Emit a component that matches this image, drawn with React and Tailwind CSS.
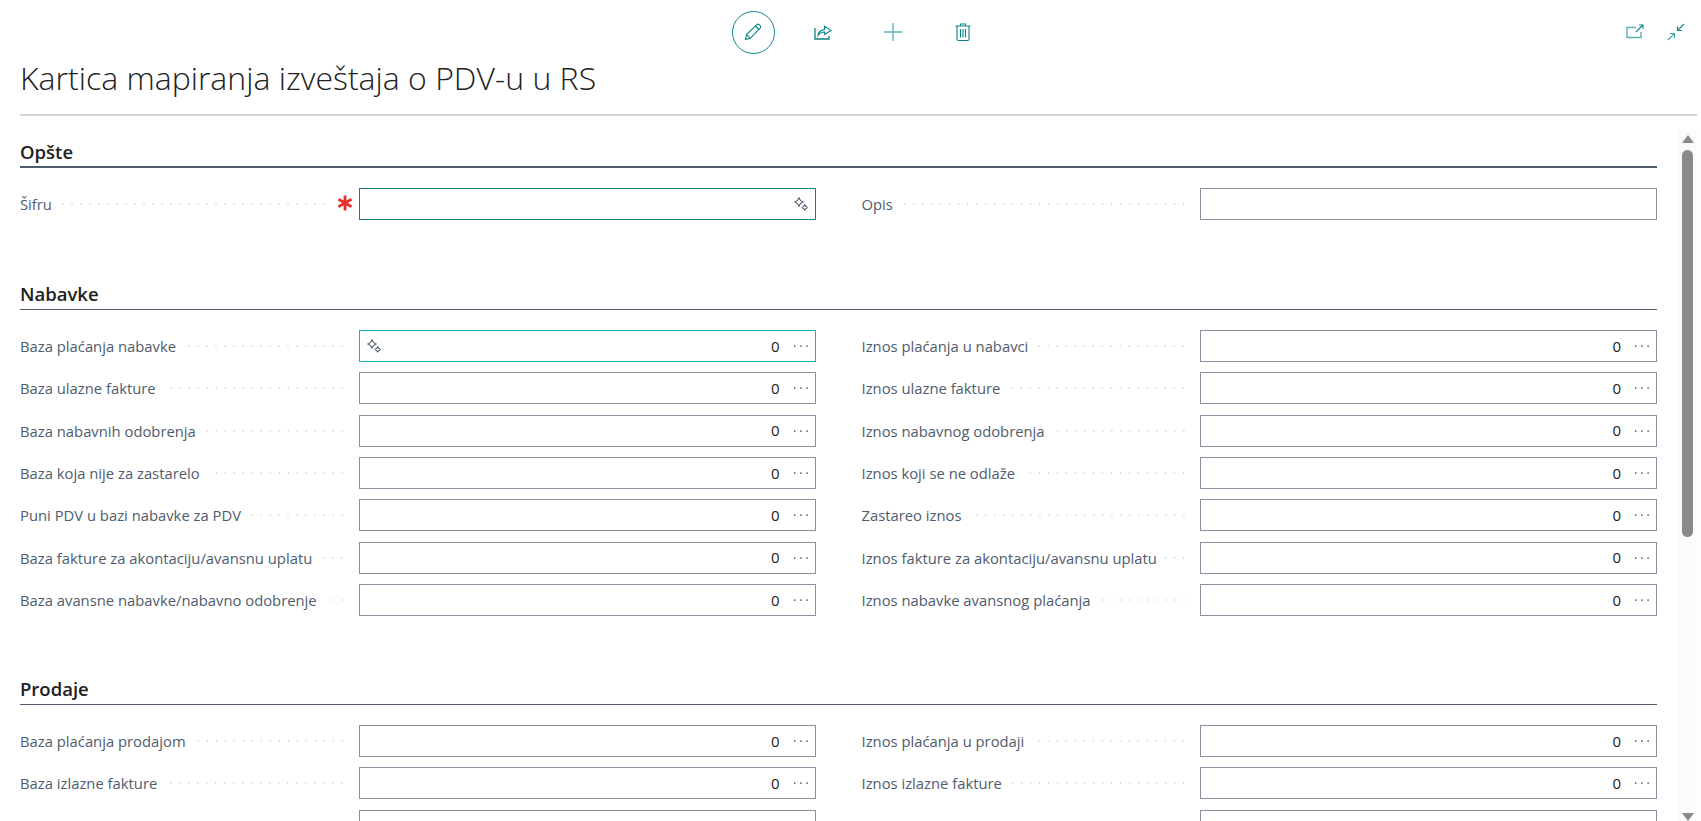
import React from "react";

const Sparkle = ({ className }) => (
  <svg viewBox="0 0 14 14" className={className} fill="none" stroke="#505c6d" strokeWidth="1.05">
    <path d="M5 0.4 Q5.8 4.2 9.6 5 Q5.8 5.8 5 9.6 Q4.2 5.8 0.4 5 Q4.2 4.2 5 0.4 Z" />
    <path d="M10.7 7.4 Q11.2 9.8 13.7 10.4 Q11.2 11 10.7 13.5 Q10.2 11 7.7 10.4 Q10.2 9.8 10.7 7.4 Z" />
  </svg>
);

const Ellipsis = () => (
  <svg viewBox="0 0 14 2" className="w-[14px] h-[2px] ml-[14px] mr-[7px]" fill="#404040">
    <rect x="0" y="0.4" width="1.4" height="1.4" />
    <rect x="6.2" y="0.4" width="1.4" height="1.4" />
    <rect x="12.4" y="0.4" width="1.4" height="1.4" />
  </svg>
);

const Field = ({ label, value = true, variant = "plain", sparkleLeft = false, sparkleRight = false, required = false }) => (
  <div className="flex items-center h-8 min-w-0">
    <span className="shrink-0 text-[14.8px] text-[#505c6d] whitespace-nowrap">{label}</span>
    <span
      className={`flex-1 h-[2px] ml-2 min-w-0 bg-[radial-gradient(circle,#d4d4d4_1px,transparent_1px)] bg-[length:9px_2px] bg-repeat-x bg-right ${
        required ? "mr-[8px]" : "mr-[12px]"
      }`}
    />
    {required && (
      <svg viewBox="0 0 16 16" className="shrink-0 w-[16px] h-[16px] -mt-[3px] mr-[6px]" stroke="#e8302a" strokeWidth="2.8">
        <path d="M8 0.5 V15.5 M1.5 4.2 L14.5 11.8 M14.5 4.2 L1.5 11.8" />
      </svg>
    )}
    <div
      className={`shrink-0 w-[457px] h-8 flex items-center border bg-white ${
        variant === "teal" ? "border-[#0e8387]" : variant === "cyan" ? "border-[#0fb6c7]" : "border-[#8a919e]"
      }`}
    >
      {sparkleLeft && <Sparkle className="w-[14px] h-[14px] ml-[7px]" />}
      <span className="flex-1" />
      {value && <span className="text-[15px] text-[#212121]">0</span>}
      {value && <Ellipsis />}
      {sparkleRight && <Sparkle className="w-[14px] h-[14px] mr-[7px]" />}
    </div>
  </div>
);

const Section = ({ title, thick, className = "", children }) => (
  <section className={className}>
    <h2
      className={`text-[18.5px] leading-[24px] font-semibold text-[#212121] ${
        thick ? "pb-[2px] border-b-2 border-[#505c6d]" : "pb-[3px] border-b border-[#505c6d]"
      }`}
    >
      {title}
    </h2>
    <div className={`grid grid-cols-[1fr_1fr] gap-x-[46px] gap-y-[10.33px] ${thick ? "mt-[20px]" : "mt-[20px]"}`}>{children}</div>
  </section>
);

const nabavke = [
  ["Baza plaćanja nabavke", "Iznos plaćanja u nabavci"],
  ["Baza ulazne fakture", "Iznos ulazne fakture"],
  ["Baza nabavnih odobrenja", "Iznos nabavnog odobrenja"],
  ["Baza koja nije za zastarelo", "Iznos koji se ne odlaže"],
  ["Puni PDV u bazi nabavke za PDV", "Zastareo iznos"],
  ["Baza fakture za akontaciju/avansnu uplatu", "Iznos fakture za akontaciju/avansnu uplatu"],
  ["Baza avansne nabavke/nabavno odobrenje", "Iznos nabavke avansnog plaćanja"],
];

export default function App() {
  return (
    <div className="h-[821px] w-[1701px] overflow-hidden bg-white font-['Open_Sans','Noto_Sans',sans-serif] flex flex-col">
      <header className="relative shrink-0 h-[115px] px-5">
        <div className="flex items-center justify-center h-[64px]">
          <div className="flex items-center ml-[3px]">
            <div className="w-[43px] h-[43px] rounded-full border border-[#0e8387] flex items-center justify-center">
              <svg viewBox="0 0 20 20" className="w-[20px] h-[20px]" fill="none" stroke="#0e8387" strokeWidth="1.1">
                <path d="M2.5 17.5 L3.6 12.6 L13.8 2.6 Q15 1.6 16.4 2.8 L17.2 3.6 Q18.2 5 17.2 6.1 L7.3 16.3 Z" />
                <path d="M3.6 12.6 L7.3 16.3 M12.4 4 L15.9 7.5" />
              </svg>
            </div>
            <svg viewBox="0 0 20 20" className="w-[20px] h-[20px] ml-[38px]" fill="none" stroke="#0e8387" strokeWidth="1.3">
              <path d="M2 6 V17 H16 V14" />
              <path d="M5 13.5 Q5.5 8.2 11.5 7.6 V4.2 L18 8.4 L11.5 12.4 V10 Q7.5 10 5 13.5 Z" strokeWidth="1.1" />
            </svg>
            <svg viewBox="0 0 20 20" className="w-[20px] h-[20px] ml-[50px]" fill="none" stroke="#5fb3b6" strokeWidth="1.4">
              <path d="M10 1 V19 M1 10 H19" />
            </svg>
            <svg viewBox="0 0 20 20" className="w-[20px] h-[20px] ml-[50px]" fill="none" stroke="#0e8387" strokeWidth="1.1">
              <path d="M2.5 4 H17.5 M7.5 4 V2 H12.5 V4" />
              <path d="M4 4 V17 Q4 18.5 5.5 18.5 H14.5 Q16 18.5 16 17 V4" />
              <path d="M7.5 7 V15.5 M10 7 V15.5 M12.5 7 V15.5" />
            </svg>
          </div>
          <div className="absolute right-[16px] top-[23px] flex items-center gap-[23px]">
            <svg viewBox="0 0 18 16" className="w-[18px] h-[16px]" fill="none" stroke="#5fb3b6" strokeWidth="1.4">
              <path d="M10 3.5 H1 V13.5 H15 V8" />
              <path d="M10 8 L16.5 1.5 M13 1 H17 V5" stroke="#0e8387" strokeWidth="1.1" />
            </svg>
            <svg viewBox="0 0 18 18" className="w-[18px] h-[18px]" fill="none" stroke="#0e8387" strokeWidth="1.1">
              <path d="M17 1 L10.5 7.5 M10.5 3.2 V7.5 H15" />
              <path d="M1 17 L7.5 10.5 M3 10.5 H7.5 V15" stroke="#3e9ea2" />
            </svg>
          </div>
        </div>
        <h1 className="text-[32px] leading-[32px] -mt-[2px] font-light text-[#212121] whitespace-nowrap">
          Kartica mapiranja izveštaja o PDV-u u RS
        </h1>
      </header>
      <div className="shrink-0 ml-5 mr-1 h-[2px] bg-[#d2d5d9] -mt-[1px]" />
      <div className="flex flex-1 min-h-0 pl-5 pr-1">
        <main className="flex-1 min-w-0 overflow-hidden pr-[21px] pt-[24px]">
          <Section title="Opšte" thick>
            <Field label="Šifru" value={false} variant="teal" sparkleRight required />
            <Field label="Opis" value={false} />
          </Section>
          <Section title="Nabavke" className="mt-[62px]">
            {nabavke.map(([l, r], i) => (
              <React.Fragment key={l}>
                <Field label={l} variant={i === 0 ? "cyan" : "plain"} sparkleLeft={i === 0} />
                <Field label={r} />
              </React.Fragment>
            ))}
          </Section>
          <Section title="Prodaje" className="mt-[61px]">
            <Field label="Baza plaćanja prodajom" />
            <Field label="Iznos plaćanja u prodaji" />
            <Field label="Baza izlazne fakture" />
            <Field label="Iznos izlazne fakture" />
            <Field label="" />
            <Field label="" />
          </Section>
        </main>
        <aside className="shrink-0 w-[19px] mt-[12px] bg-[#fbfbfb] flex flex-col items-center">
          <span className="w-0 h-0 mt-[7px] border-x-[6.5px] border-x-transparent border-b-[8px] border-b-[#8a8a8a]" />
          <span className="w-[11px] h-[387px] mt-[7px] rounded-full bg-[#8a8a8a]" />
          <span className="flex-1" />
          <span className="w-0 h-0 border-x-[6.5px] border-x-transparent border-t-[8px] border-t-[#8a8a8a]" />
        </aside>
      </div>
    </div>
  );
}
